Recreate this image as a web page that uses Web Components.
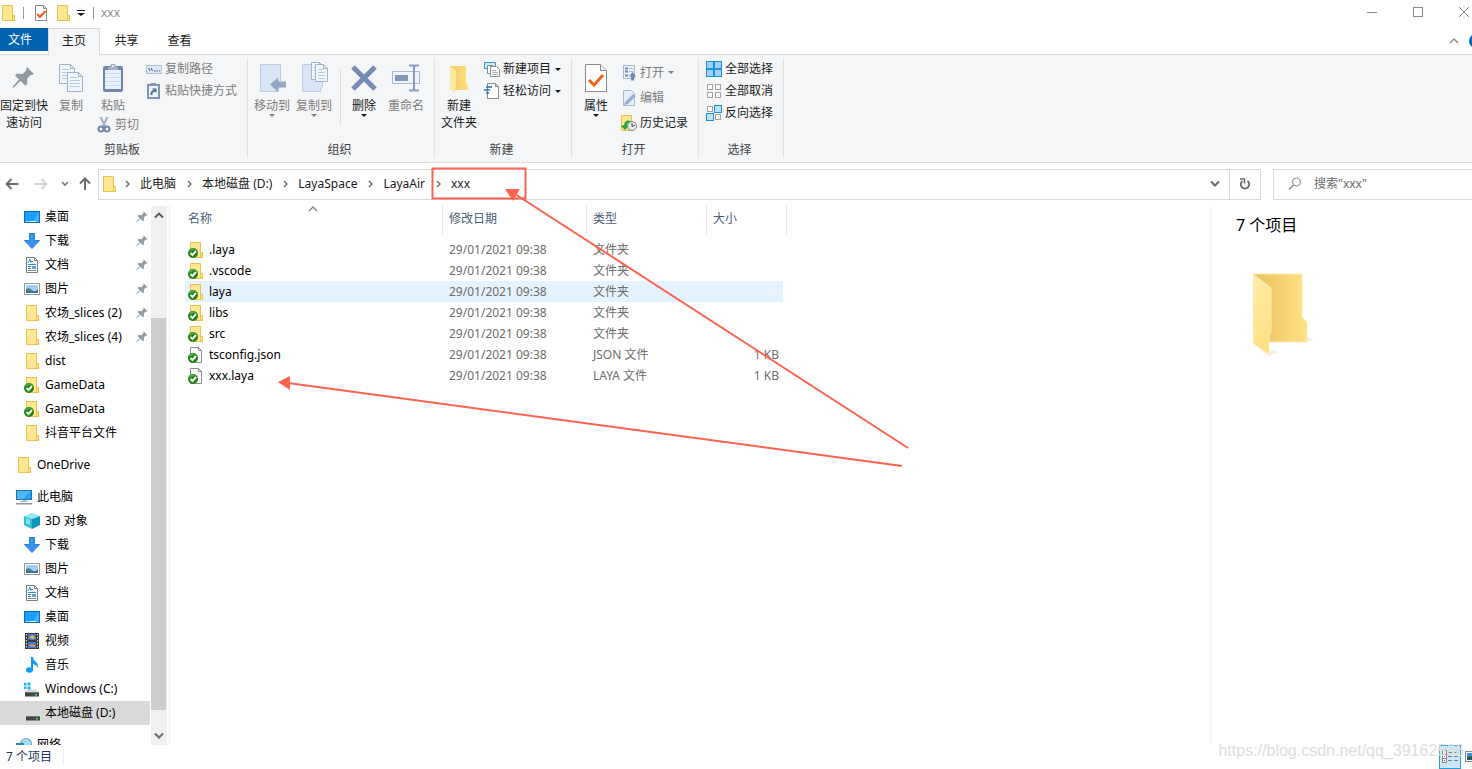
<!DOCTYPE html>
<html lang="zh-CN">
<head>
<meta charset="utf-8">
<title>xxx</title>
<style>
html,body{margin:0;height:100%}
body{font:12px/16px "Noto Sans","Noto Sans CJK SC",sans-serif;color:#1a1a1a;background:#fff;overflow:hidden}
</style>
</head>
<body>
<explorer-window>
  <title-bar slot="title" caption="xxx"></title-bar>
  <ribbon-tabs slot="tabs"></ribbon-tabs>
  <ribbon-bar slot="ribbon">
    <ribbon-group label="剪贴板" style="--w:247px;--pl:0px">
      <big-button icon="pin" style="--bw:48px">固定到快<br>速访问</big-button>
      <big-button icon="copy" disabled style="--bw:46px">复制</big-button>
      <button-stack class="paste">
        <big-button icon="paste" disabled style="--bw:34px">粘贴</big-button>
        <small-button icon="cut" disabled>剪切</small-button>
      </button-stack>
      <button-stack>
        <small-button icon="path" disabled>复制路径</small-button>
        <small-button icon="shortcut" disabled>粘贴快捷方式</small-button>
      </button-stack>
    </ribbon-group>
    <ribbon-group label="组织" style="--w:186px">
      <big-button icon="moveto" menu disabled>移动到</big-button>
      <big-button icon="copyto" menu disabled>复制到</big-button>
      <ribbon-rule></ribbon-rule>
      <big-button icon="delete" menu>删除</big-button>
      <big-button icon="rename" disabled>重命名</big-button>
    </ribbon-group>
    <ribbon-group label="新建" style="--w:136px">
      <big-button icon="newfolder">新建<br>文件夹</big-button>
      <button-stack style="--ml:4px">
        <small-button icon="newitem" menu>新建项目</small-button>
        <small-button icon="easy" menu>轻松访问</small-button>
      </button-stack>
    </ribbon-group>
    <ribbon-group label="打开" style="--w:126px">
      <big-button icon="props" menu>属性</big-button>
      <button-stack style="--ml:4px;--row:25px;--pt:5px">
        <small-button icon="open" menu disabled>打开</small-button>
        <small-button icon="edit" disabled>编辑</small-button>
        <small-button icon="history">历史记录</small-button>
      </button-stack>
    </ribbon-group>
    <ribbon-group label="选择" style="--w:84px;--pl:7px">
      <button-stack>
        <small-button icon="selall">全部选择</small-button>
        <small-button icon="selnone">全部取消</small-button>
        <small-button icon="selinv">反向选择</small-button>
      </button-stack>
    </ribbon-group>
  </ribbon-bar>
  <address-row slot="address" path="此电脑|本地磁盘 (D:)|LayaSpace|LayaAir|xxx"></address-row>
  <nav-tree slot="tree">
    <nav-item icon="desktop" pinned>桌面</nav-item>
    <nav-item icon="download" pinned>下载</nav-item>
    <nav-item icon="doc" pinned>文档</nav-item>
    <nav-item icon="picture" pinned>图片</nav-item>
    <nav-item icon="folder" pinned>农场_slices (2)</nav-item>
    <nav-item icon="folder" pinned>农场_slices (4)</nav-item>
    <nav-item icon="folder">dist</nav-item>
    <nav-item icon="folderok">GameData</nav-item>
    <nav-item icon="folderok">GameData</nav-item>
    <nav-item icon="folder">抖音平台文件</nav-item>
    <nav-item icon="folder" root>OneDrive</nav-item>
    <nav-item icon="pc" root>此电脑</nav-item>
    <nav-item icon="cube">3D 对象</nav-item>
    <nav-item icon="download">下载</nav-item>
    <nav-item icon="picture">图片</nav-item>
    <nav-item icon="doc">文档</nav-item>
    <nav-item icon="desktop">桌面</nav-item>
    <nav-item icon="video">视频</nav-item>
    <nav-item icon="music">音乐</nav-item>
    <nav-item icon="drivec">Windows (C:)</nav-item>
    <nav-item icon="drive" selected>本地磁盘 (D:)</nav-item>
    <nav-item icon="network" root>网络</nav-item>
  </nav-tree>
  <file-list slot="files"></file-list>
  <details-pane slot="details">7 个项目</details-pane>
  <status-bar slot="status">7 个项目</status-bar>
  <arrow-notes slot="notes"></arrow-notes>
  <water-mark slot="notes">https://blog.csdn.net/qq_39162566</water-mark>
</explorer-window>

<script>
const folder = '<path d="M2.5.5h10v10h2v5h-12z" fill="#ffe793" stroke="#e9c350"/><path d="M12.500 15.500v-5h2v5z" fill="#ffe384" stroke="#e9c350"/>';
const ok = '<circle cx="5" cy="11" r="5" fill="#1f8413"/><path d="M1.500 8a5 5 0 0 1 7-.5Q5 7 1.500 10z" fill="#55a94a"/><path d="M2.500 11l2 2 3.500-4" fill="none" stroke="#fff" stroke-width="2"/>';
const page = '<path d="M2.500.5h8l3 3v12h-11z" fill="#fff" stroke="#8f8f8f"/><path d="M10.500.5v3h3" fill="none" stroke="#8f8f8f"/>';
const pinShape = '<path d="M15 1l7 7-2 1-1-.3-4 4 .5 5-2 2-5-5-6.500 6.500-1.500.5.5-1.500L7 13.500 3 9.500l2-2 5.500.5 4-4-.5-1z" fill="#8f9aa3"/>';
const drive = '<path d="M3.500 8.500h9l2 2.500h-13z" fill="#d5d7d8"/><rect x="1" y="11" width="14" height="4.500" fill="#3f4447"/><path d="M1 11.500h14" stroke="#73797c"/><rect x="11" y="13" width="2" height="1.500" fill="#3fe25b"/>';
const sheet = (x,y,w,h)=>`<path d="M${x+.5} ${y+.5}h${w-5}l4 4v${h-5}h-${w-1}z" fill="#f1f6fc" stroke="#9fb3cf"/><path d="M${x+w-4.500} ${y+.5}v4h4" fill="none" stroke="#9fb3cf"/><path d="M${x+3} ${y+5.500}h${w-8}M${x+3} ${y+8.500}h${w-6}M${x+3} ${y+11.500}h${w-6}M${x+3} ${y+14.500}h${w-6}" stroke="#b4c8e4"/>`;
const sq = (x,y,on)=>`<rect x="${x+.5}" y="${y+.5}" width="${on?6:5}" height="${on?6:5}" fill="${on?'#bfe2fb':'#fff'}" stroke="${on?'#1f8fe0':'#a3a3a3'}"/>`;
const ICONS = {
  folder:[16,16,folder],
  folderok:[16,16,folder+ok],
  fileok:[16,16,page+ok],
  check:[16,16,'<path d="M2.500.5h8l3 3v12h-11z" fill="#fff" stroke="#8a8a8a"/><path d="M10.500.5v3h3" fill="none" stroke="#8a8a8a"/><path d="M4 9l3 3 5.500-6" fill="none" stroke="#f05a1c" stroke-width="2"/>'],
  qmenu:[8,6,'<path d="M0 0h8v1H0zM0 3h8L4 6z" fill="#1a1a1a"/>'],
  pin:[24,32,'<g transform="translate(0 4)">'+pinShape+'</g>'],
  pinsm:[12,12,'<g transform="scale(.52)">'+pinShape+'</g>'],
  copy:[26,32,sheet(1,2,16,20)+sheet(9,10,16,20)],
  paste:[22,32,'<rect x="1" y="4" width="20" height="26" rx="2" fill="#7186ac"/><rect x="3" y="8" width="16" height="19" fill="#eaf2fc"/><path d="M3 11.500h16M3 15.500h16M3 19.500h16M3 23.500h16" stroke="#cddcf2"/><path d="M6 8V5h2l1-3h4l1 3h2v3z" fill="#a4b0c4"/><circle cx="11" cy="4" r="1" fill="#fff"/>'],
  cut:[16,18,'<path d="M4.500 1l5 10M11.500 1l-5 10" stroke="#a3b1c6" stroke-width="2"/><circle cx="5" cy="13" r="2.500" fill="none" stroke="#7186ac" stroke-width="2"/><circle cx="11" cy="13" r="2.500" fill="none" stroke="#7186ac" stroke-width="2"/>'],
  path:[16,16,'<rect x=".5" y="4.500" width="15" height="8" fill="#dbe8f7" stroke="#b0c3df"/><path d="M2.500 7l1.500 3M5 7l1.500 3M8 10h1.500M10.500 10H12M13 10h1" stroke="#4d6185"/>'],
  shortcut:[16,16,'<rect x="2" y="2" width="11" height="13" fill="#edf4fc" stroke="#8195b7" stroke-width="2"/><path d="M5 0h5v3H5z" fill="#8195b7"/><path d="M5.500 12q-.5-4 3-4V6" fill="none" stroke="#526f9e" stroke-width="2"/><path d="M6 5.500h4.500v4.500z" fill="#526f9e"/>'],
  moveto:[28,32,'<path d="M2.500 2.500h20v22l-2 3v2h-18z" fill="#d9e5f5" stroke="#bdcce3"/><path d="M20.500 18v11.500" stroke="#bdcce3"/><path d="M12 22.500l8-7v4h8v6h-8v4.500z" fill="#96a7c6"/>'],
  copyto:[28,32,'<path d="M2.500 2.500h20v22l-2 3v2h-18z" fill="#d9e5f5" stroke="#bdcce3"/>'+sheet(11,0,13,18)+sheet(15,2,13,18)],
  delete:[28,32,'<path d="M3 5l22 22M25 5L3 27" stroke="#768bb2" stroke-width="5"/>'],
  rename:[30,32,'<rect x="1.500" y="9.500" width="27" height="12" fill="#eef4fb" stroke="#a9bad5"/><rect x="4" y="13" width="13" height="6" fill="#8094b8"/><path d="M18 3.500h4l1 2 1-2h4M23 5v21M18 28.500h4l1-2 1 2h4" fill="none" stroke="#8b9dbe" stroke-width="2"/>'],
  newfolder:[24,32,'<defs><linearGradient id="a"><stop stop-color="#edc963"/><stop offset="1" stop-color="#ffe07c"/></linearGradient></defs><path d="M3 4h16v16l2 3v5H3z" fill="url(#a)"/><path d="M3 4l6 5v13l-1 9-5-4z" fill="#ffe9a2"/>'],
  newitem:[16,16,'<path d="M.5 1.500h11v6H.5z" fill="#cdeaf8" stroke="#3d92bf"/><path d="M3.500 4.500h5v8h-5z" fill="#fff" stroke="#7d8c93"/><path d="M6.500 5.500h6l3 3v7h-9z" fill="#fff" stroke="#8b8b8b"/><path d="M8 9.500h4M8 11.500h6M8 13.500h6" stroke="#9bb5c7"/>'],
  easy:[16,16,'<path d="M3.500.5h8l3 3v12h-11z" fill="#fff" stroke="#8b8b8b"/><path d="M11.500.5v3h3" fill="none" stroke="#8b8b8b"/><path d="M2 4h6M0 7h6M2 10h3" stroke="#2274b5" stroke-width="1.500"/>'],
  props:[24,32,'<path d="M1.500 2.500h15l6 6v21h-21z" fill="#fff" stroke="#8a8a8a"/><path d="M16.500 2.500v6h6" fill="#eee" stroke="#8a8a8a"/><path d="M5 18l5 5 9-10" fill="none" stroke="#f36418" stroke-width="3"/>'],
  open:[16,16,'<rect x="2.500" y=".5" width="11" height="13" fill="#e9f0fa" stroke="#a9b9d4"/><path d="M4 3.500h3M4 6.500h3M4 10.500h3" stroke="#7188b0" stroke-width="2"/><path d="M8 3.500h4M8 6.500h4" stroke="#a9b9d4"/><path d="M10 15.500v-4H8L11.500 7l3.500 4.500h-2v4z" fill="#7188b0"/>'],
  edit:[16,16,'<path d="M2.500.5h8l3 3v12h-11z" fill="#e6effa" stroke="#a9b9d4"/><path d="M4 12l8-8 3 2-8 8-4 1z" fill="#9cafce"/>'],
  history:[16,16,'<g transform="translate(-2)">'+folder+'</g><path d="M3 10q1-6 7-4v2q-4-1-4 3h2l-4 4-4-4z" fill="#29a83b"/><circle cx="11" cy="11" r="4.500" fill="#ebebeb" stroke="#888"/><path d="M11 8v3.500l3-1.500" fill="none" stroke="#444"/>'],
  selall:[16,16,'<g fill="#9bd3fa" stroke="#1f8fe0"><rect x=".5" y=".5" width="7" height="7"/><rect x="8.500" y=".5" width="7" height="7"/><rect x=".5" y="8.500" width="7" height="7"/><rect x="8.500" y="8.500" width="7" height="7"/></g>'],
  selnone:[16,16,sq(1,1)+sq(9,1)+sq(1,9)+sq(9,9)],
  selinv:[16,16,'<g fill="#fff" stroke="#a3a3a3"><rect x="1.500" y="1.500" width="5" height="5"/><rect x="9.500" y="9.500" width="5" height="5"/></g>'+'<g fill="#bfe2fb" stroke="#1f8fe0"><rect x="8.500" y=".5" width="7" height="7"/><rect x=".5" y="8.500" width="7" height="7"/></g>'],
  back:[14,12,'<path d="M13.500 6H2M6.500 1L1.500 6l5 5" fill="none" stroke="#6b6b6b" stroke-width="1.800"/>'],
  fwd:[14,12,'<path d="M.5 6H12M7.500 1l5 5-5 5" fill="none" stroke="#d4d4d4" stroke-width="1.800"/>'],
  up:[12,14,'<path d="M6 13V2M1 6.500L6 1.500l5 5" fill="none" stroke="#6b6b6b" stroke-width="2"/>'],
  down:[8,6,'<path d="M1 1l3 3 3-3" fill="none" stroke="#777" stroke-width="1.600"/>'],
  down2:[10,8,'<path d="M1 1.500l4 4 4-4" fill="none" stroke="#6b6b6b" stroke-width="2"/>'],
  up2:[10,8,'<path d="M1 6.500l4-4 4 4" fill="none" stroke="#555" stroke-width="1.800"/>'],
  upthin:[10,6,'<path d="M1 5l4-4 4 4" fill="none" stroke="#888" stroke-width="1.400"/>'],
  right:[5,8,'<path d="M1 1l3 3-3 3" fill="none" stroke="#6f6f6f" stroke-width="1.500"/>'],
  refresh:[12,12,'<path d="M3.500 3A4.200 4.200 0 1 0 8.500 3" fill="none" stroke="#6b6b6b" stroke-width="1.800"/><path d="M1 1h4.500v4.500" fill="none" stroke="#6b6b6b" stroke-width="1.600"/>'],
  glass:[14,14,'<circle cx="8.500" cy="5" r="4" fill="none" stroke="#888"/><path d="M5.500 8L1 12.500" stroke="#888" stroke-width="1.300"/>'],
  min:[10,10,'<path d="M0 5.500h10" stroke="#888"/>'],
  max:[10,10,'<rect x=".5" y=".5" width="9" height="9" fill="none" stroke="#888"/>'],
  close:[10,10,'<path d="M0 0l10 10M10 0L0 10" stroke="#888"/>'],
  desktop:[16,16,'<rect x=".5" y="2.500" width="15" height="11" fill="#1a9fff" stroke="#0a6fb8"/><path d="M15 3v8L9 13z" fill="#42b0ff"/><path d="M2 12.500h2M5 12.500h7M13 12.500h1" stroke="#dff1ff"/>'],
  download:[16,16,'<path d="M5.500.5h5v7h5L8 15.500.5 7.500h5z" fill="#3a97ea" stroke="#2c7fc9"/>'],
  doc:[16,16,'<path d="M2.500.5h8l3 3v12h-11z" fill="#fff" stroke="#7b7b7b"/><path d="M10.500.5v3h3" fill="none" stroke="#7b7b7b"/><path d="M4 6l2-4 1 4M7 4.500h2M4 7.500h8M4 9.500h3M4 11.500h3" fill="none" stroke="#2d8fc9"/><rect x="8" y="9" width="4" height="3" fill="#5ba4c9"/><path d="M4 13.500h8" stroke="#888"/>'],
  picture:[16,16,'<rect x=".5" y="2.500" width="15" height="11" fill="#fff" stroke="#999"/><rect x="2" y="4" width="12" height="8" fill="#a5cff3"/><path d="M2 8q3-2 6 1t6-1v4H2z" fill="#4f7f78"/><path d="M2 10.500h12V12H2z" fill="#3c6fae"/>'],
  pc:[16,16,'<rect x=".5" y="1.500" width="15" height="9" fill="#4cb8f7" stroke="#23719f"/><path d="M15 2v8H7z" fill="#22a2f5"/><path d="M7 11h3v1H7zM4 12h8v1H4z" fill="#aab3ba"/><path d="M0 14h16v1.500H0z" fill="#8b98a3"/>'],
  cube:[16,16,'<path d="M0 3l8-3 8 3-8 3z" fill="#8feaf4"/><path d="M0 3l8 3v10l-8-4z" fill="#31bdd0"/><path d="M16 3L8 6v10l8-4z" fill="#0a94b5"/><path d="M2 5l4 1.500V12l-4-1z" fill="#82dfeb"/>'],
  video:[16,16,'<rect x="1" y="0" width="14" height="16" fill="#3b3b3b"/><path d="M2.500 1v15M13.500 1v15" stroke="#ddd" stroke-dasharray="1.500 1.500"/><rect x="4" y="1" width="8" height="6" fill="#4d76cf"/><rect x="4" y="9" width="8" height="6" fill="#4579d8"/><path d="M5 5l3-3 3 2-1 2z" fill="#e4bd30"/><path d="M5 13l2-2 4 1v2z" fill="#d99a3c"/>'],
  music:[16,16,'<ellipse cx="5.500" cy="13" rx="3.500" ry="2.800" fill="#0f9af5"/><path d="M7 0h2q0 3 3 5t1 7q1-4-4-5v6H7z" fill="#0f9af5"/>'],
  drivec:[16,16,drive+'<path d="M0 2h2.500v2.500H0zM3.500 1.500H6.500v3H3.500zM0 5.500h2.500V8H0zM3.500 5.500h3v3h-3z" fill="#18b3ef"/>'],
  drive:[16,16,'<g transform="translate(1)">'+drive+'</g>'],
  network:[16,16,'<circle cx="10" cy="7" r="6" fill="#4fa0cf"/><path d="M5 4q5-5 9 0t-4 6z" fill="#a8dbea"/><rect x="0" y="6" width="8" height="6" fill="#3289bb"/>'],
  listview:[16,14,'<path d="M.5.5h4v12h-4zM.5 4.500h4M.5 8.500h4" fill="#fff" stroke="#888"/><path d="M2.500 2v1M2.500 6v1M2.500 10v1" stroke="#d33"/><path d="M6 2.500h4M12 2.500h4M6 6.500h4M12 6.500h4M6 10.500h4M12 10.500h4" stroke="#70848f"/>'],
  thumb:[16,12,'<rect x=".5" y=".5" width="15" height="10" fill="#fff" stroke="#888"/><rect x="2" y="2" width="12" height="7" fill="#3d8fd6"/><path d="M2 6q5-2 12 1v2H2z" fill="#2e5a52"/>'],
  bigfolder:[60,84,'<defs><linearGradient id="b"><stop stop-color="#e9c35f"/><stop offset="1" stop-color="#ffe083"/></linearGradient><linearGradient id="c" x2=".4" y2="1"><stop stop-color="#ffedac"/><stop offset="1" stop-color="#ffdf83"/></linearGradient></defs><path d="M15 83l10-4-7-2zM52 69l8-2-6-3z" fill="#eee"/><path d="M0 1h49v43l5 5v20H0z" fill="url(#b)" stroke="#ffe9ae"/><path d="M0 1l18 14v44l-2 3v20L0 70z" fill="url(#c)" stroke="#ffe9ae"/>']
};

const CSS = ':host,*{box-sizing:border-box}button{font:inherit;color:inherit;background:none;border:0;padding:0;margin:0}a{color:inherit;text-decoration:none}';
function define(name, css, html){
  customElements.define(name, class extends HTMLElement{
    connectedCallback(){
      if(this.shadowRoot) return;
      const t = document.createElement('template');
      t.innerHTML = `<style>${CSS}${css}</style>` + (typeof html === 'function' ? html(this) : html);
      this.attachShadow({mode:'open'}).append(t.content.cloneNode(true));
    }
  });
}
const icon = (n, extra='') => `<x-icon name="${n}" ${extra}></x-icon>`;

define('x-icon', ':host{display:block;flex:none}svg{display:block}', el => {
  const [w,h,body] = ICONS[el.getAttribute('name')];
  return `<svg width="${w}" height="${h}" viewBox="0 0 ${w} ${h}" aria-hidden="true">${body}</svg>`;
});

define('explorer-window', `:host{display:flex;flex-direction:column;height:100vh;position:relative;overflow:hidden}
 main{display:flex;flex:1;min-height:0}`,
 `<slot name="title"></slot><slot name="tabs"></slot><slot name="ribbon"></slot><slot name="address"></slot>
  <main><slot name="tree"></slot><slot name="files"></slot><slot name="details"></slot></main>
  <slot name="status"></slot><slot name="notes"></slot>`);

define('title-bar', `:host{display:flex;flex:none;align-items:center;height:28px;padding:0 3px 2px 0;color:#8c8c8c}
 i{width:1px;height:12px;background:#999}.s1{margin:0 9px 0 7px}.s2{margin:0 7px 0 8px}
 .gap{margin-left:6px}.menu{margin-left:6px}.win{display:flex;margin-left:auto;gap:36px;padding-bottom:2px}`,
 el => `${icon('folder')}<i class="s1"></i><button aria-label="属性">${icon('check')}</button><button class="gap" aria-label="新建文件夹">${icon('folder')}</button>
 <button class="menu" aria-label="自定义">${icon('qmenu')}</button><i class="s2"></i><span>${el.getAttribute('caption')}</span>
 <div class="win"><button aria-label="最小化">${icon('min')}</button><button aria-label="最大化">${icon('max')}</button><button aria-label="关闭">${icon('close')}</button></div>`);

define('ribbon-tabs', `:host{display:flex;flex:none;height:27px;border-bottom:1px solid #dadbdc}
 button{width:53px;height:25px}.file{width:48px;height:23px;padding-right:8px;background:#0063b1;color:#fff}
 .on{width:52px;height:27px;padding-bottom:2px;border:1px solid #dadbdc;border-bottom:0;background:#f5f6f7}
 .r{display:flex;align-items:center;margin-left:auto;gap:10px}.r button{width:auto;height:auto}
 .help{width:3px;height:14px;overflow:hidden}.help b{display:block;width:14px;height:14px;border-radius:7px;background:#0067b8}`,
 `<button class="file">文件</button><button class="on">主页</button><button>共享</button><button>查看</button>
 <div class="r"><button aria-label="折叠功能区">${icon('upthin')}</button><div class="help"><b></b></div></div>`);

define('ribbon-bar', ':host{display:flex;flex:none;height:108px;background:#f5f6f7;border-bottom:1px solid #dadbdc}', '<slot></slot>');
define('ribbon-group', `:host{display:flex;flex:none;flex-direction:column;width:calc(var(--w) + 1px);position:relative}
 :host::after{content:"";position:absolute;right:0;top:3px;bottom:4px;width:1px;background:#e1e2e3}
 .items{display:flex;flex:1;padding-left:var(--pl,3px)}.label{height:20px;text-align:center;padding-right:4px;color:#444}`,
 el => `<div class="items"><slot></slot></div><div class="label">${el.getAttribute('label')}</div>`);
define('ribbon-rule', ':host{display:block;width:1px;height:55px;margin:15px 2px 0 5px;background:#dcdddf}', '');
define('button-stack', `:host{display:flex;flex-direction:column;margin-left:var(--ml,0px);padding-top:var(--pt,3px)}
 :host(.paste){padding:0 7px 0 2px}`, '<slot></slot>');
define('big-button', `:host{display:block;flex:none;width:var(--bw,42px)}
 button{display:flex;flex-direction:column;align-items:center;width:100%;padding-top:7px;line-height:17px;white-space:nowrap}
 :host([disabled]){color:#7d7d7d}span{margin-top:3px}u{border:3px solid transparent;border-top-color:currentColor;border-bottom:0}`,
 el => `<button ${el.hasAttribute('disabled')?'disabled':''}>${icon(el.getAttribute('icon'))}<span><slot></slot></span>${el.hasAttribute('menu')?'<u></u>':''}</button>`);
define('small-button', `:host{display:block;height:var(--row,22px)}
 button{display:flex;align-items:center;gap:3px;height:100%;white-space:nowrap}x-icon{width:16px}
 :host([disabled]){color:#7d7d7d}u{border:3px solid transparent;border-top-color:currentColor;border-bottom:0;margin-left:1px}`,
 el => `<button ${el.hasAttribute('disabled')?'disabled':''}>${icon(el.getAttribute('icon'))}<span><slot></slot></span>${el.hasAttribute('menu')?'<u></u>':''}</button>`);

define('address-row', `:host{display:flex;flex:none;align-items:center;height:42px;padding-left:5px}
 .nav{display:flex;align-items:center;width:93px}.nav button+button{margin-left:15px}.nav button:nth-child(3){margin-left:13px}.nav button:nth-child(4){margin-left:10px}
 .box{display:flex;flex:1;height:31px;border:1px solid #d9d9d9;align-items:center;padding-left:2px}
 .sep{display:flex;justify-content:center;width:26px}.box>x-icon{margin-right:-3px}
 .drop{margin-left:auto;padding:0 9px}.re{display:flex;align-items:center;justify-content:center;width:31px;height:100%;border-left:1px solid #d9d9d9}
 label{display:flex;align-items:center;width:199px;height:31px;margin-left:12px;padding-left:14px;gap:12px;border:1px solid #d9d9d9;border-right:0}
 input{flex:1;min-width:0;border:0;outline:0;padding:0;font:inherit;background:none}input::placeholder{color:#6d6d6d;opacity:1}`,
 el => `<div class="nav"><button aria-label="后退">${icon('back')}</button><button aria-label="前进" disabled>${icon('fwd')}</button><button aria-label="最近">${icon('down')}</button><button aria-label="向上">${icon('up')}</button></div>
 <div class="box">${icon('folder')}${el.getAttribute('path').split('|').map(p=>`<span class="sep">${icon('right')}</span><a href="#">${p}</a>`).join('')}
 <button class="drop" aria-label="展开">${icon('down2')}</button><button class="re" aria-label="刷新">${icon('refresh')}</button></div>
 <label aria-label="搜索">${icon('glass')}<input type="search" placeholder='搜索"xxx"'></label>`);

define('nav-tree', `:host{display:flex;flex:none;width:170px;border-right:1px solid #f0f0f0}
 nav{width:150px;overflow:hidden}
 .bar{display:flex;flex-direction:column;width:16px;margin:1px 0 0 1px;background:#f0f0f0}
 .bar button{display:flex;flex:none;align-items:center;justify-content:center;height:18px}
 .track{flex:1;display:flex;flex-direction:column}.track::before{content:"";flex:94}.track b{flex:392;background:#cdcdcd;width:15px}.track::after{content:"";flex:17}`,
 `<nav><slot></slot></nav><div class="bar"><button aria-label="向上滚动">${icon('up2')}</button><div class="track"><b></b></div><button aria-label="向下滚动">${icon('down2')}</button></div>`);
define('nav-item', `:host{display:block}:host([root]){margin-top:8px}
 a{display:flex;align-items:center;gap:5px;height:24px;padding:0 2px 0 24px;color:#000;white-space:nowrap}
 :host([root]) a{padding-left:16px}:host([selected]) a{background:#d9d9d9}
 .i{width:16px}.p{margin-left:auto}`,
 el => `<a href="#">${icon(el.getAttribute('icon'),'class="i"')}<span><slot></slot></span>${el.hasAttribute('pinned')?icon('pinsm','class="p"'):''}</a>`);

const rows = [['folderok','.laya','文件夹',''],['folderok','.vscode','文件夹',''],['folderok','laya','文件夹',''],['folderok','libs','文件夹',''],['folderok','src','文件夹',''],['fileok','tsconfig.json','JSON 文件','1 KB'],['fileok','xxx.laya','LAYA 文件','1 KB']];
define('file-list', `:host{display:block;flex:1;min-width:0;overflow:hidden;padding:1px 0 0 15px}
 table{border-collapse:separate;border-spacing:0;table-layout:fixed;width:602px}
 th{height:28px;padding:0 0 2px 6px;text-align:left;font-weight:400;color:#4c607a;border-right:1px solid #e5e5e5;position:relative}
 th:first-child{padding-left:3px}th x-icon{position:absolute;left:calc(50% - 6px);top:0}
 td{height:21px;padding:0 0 0 6px;color:#6d6d6d}td:first-child{padding-left:3px;color:#000}td:last-child{text-align:right;padding-right:8px}
 .n{display:flex;align-items:center;gap:5px}.space td{height:5px}
 .hot td{background:#e5f3ff}.hot td:last-child{background:linear-gradient(#e5f3ff,#e5f3ff) no-repeat 0 0/calc(100% - 4px) 100%}`,
 `<table><colgroup><col style="width:258px"><col style="width:144px"><col style="width:120px"><col style="width:80px"></colgroup>
 <thead><tr><th>名称${icon('upthin')}</th><th>修改日期</th><th>类型</th><th>大小</th></tr></thead>
 <tbody><tr class="space"><td></td></tr>${rows.map((r,i)=>`<tr class="${i===2?'hot':''}"><td><div class="n">${icon(r[0])}<span>${r[1]}</span></div></td><td>29/01/2021 09:38</td><td>${r[2]}</td><td>${r[3]}</td></tr>`).join('')}</tbody></table>`);

define('details-pane', `:host{display:block;flex:none;width:261px;padding:8px 0 0 24px;border-left:1px solid #f3f3f3;font-size:16px;line-height:24px;color:#000}
 x-icon{margin:36px 0 0 17px}`, `<div><slot></slot></div>${icon('bigfolder')}`);
define('status-bar', `:host{display:flex;flex:none;align-items:center;height:24px;color:#1e395b;overflow:hidden}
 span{padding:0 11px 0 6px;border-right:1px solid #f0f0f0}
 .v{display:flex;align-items:center;margin-left:auto;gap:4px}.v button{height:24px}
 .on{display:flex;align-items:center;justify-content:center;width:22px;border:1px solid #26a0da;background:#cbe8f6}.on x-icon{width:16px}.t{width:7px;overflow:hidden}`,
 `<span><slot></slot></span><div class="v"><button class="on" aria-label="详细信息">${icon('listview')}</button><button class="t" aria-label="大图标">${icon('thumb')}</button></div>`);

define('arrow-notes', ':host{position:absolute;left:0;top:0;pointer-events:none}svg{display:block}',
 `<svg width="920" height="480" viewBox="0 0 920 480" fill="none" stroke="#ff6350" stroke-width="2" aria-hidden="true"><rect x="432.500" y="168.500" width="93" height="30"/>
 <path d="M908 448L515 194M902 466L288 383"/><path d="M505 189h15l-7 12zM278 382l12-6v14z" fill="#ff6350" stroke="none"/></svg>`);
define('water-mark', ':host{position:absolute;right:8px;bottom:8px;font:16px/20px "Liberation Sans",sans-serif;color:#dedede;pointer-events:none}', '<slot></slot>');
</script>
</body>
</html>
